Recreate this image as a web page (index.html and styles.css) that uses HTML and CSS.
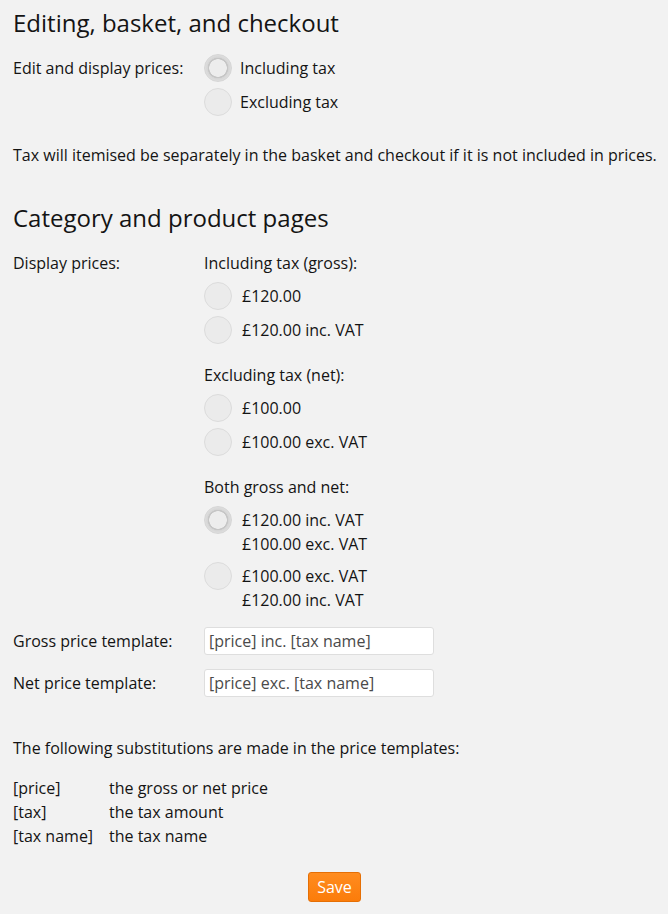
FILE: index.html
```html
<!DOCTYPE html>
<html lang="en">
<head>
<meta charset="utf-8">
<title>Tax settings</title>
<link rel="stylesheet" href="styles.css">
</head>
<body>
<form class="page">
  <h2 class="heading first">Editing, basket, and checkout</h2>
  <div class="field edit-field">
    <div class="field-label">Edit and display prices:</div>
    <div class="field-body">
      <label class="option"><input type="radio" name="edit" checked><span class="opt-text">Including tax</span></label>
      <label class="option"><input type="radio" name="edit"><span class="opt-text">Excluding tax</span></label>
    </div>
  </div>
  <p class="note">Tax will itemised be separately in the basket and checkout if it is not included in prices.</p>

  <h2 class="heading">Category and product pages</h2>
  <div class="field display-field">
    <div class="field-label">Display prices:</div>
    <div class="field-body">
      <div class="group-title">Including tax (gross):</div>
      <label class="option"><input type="radio" name="display"><span class="opt-text">£120.00</span></label>
      <label class="option"><input type="radio" name="display"><span class="opt-text">£120.00 inc. VAT</span></label>
      <div class="group-title spaced">Excluding tax (net):</div>
      <label class="option"><input type="radio" name="display"><span class="opt-text">£100.00</span></label>
      <label class="option"><input type="radio" name="display"><span class="opt-text">£100.00 exc. VAT</span></label>
      <div class="group-title spaced">Both gross and net:</div>
      <label class="option"><input type="radio" name="display" checked><span class="opt-text">£120.00 inc. VAT<br>£100.00 exc. VAT</span></label>
      <label class="option"><input type="radio" name="display"><span class="opt-text">£100.00 exc. VAT<br>£120.00 inc. VAT</span></label>
    </div>
  </div>

  <div class="templates">
    <div class="field input-row">
      <div class="field-label">Gross price template:</div>
      <div class="field-body"><input class="text-input" type="text" value="[price] inc. [tax name]"></div>
    </div>
    <div class="field input-row">
      <div class="field-label">Net price template:</div>
      <div class="field-body"><input class="text-input" type="text" value="[price] exc. [tax name]"></div>
    </div>
  </div>

  <p class="subst-intro">The following substitutions are made in the price templates:</p>
  <dl class="subst">
    <dt>[price]</dt><dd>the gross or net price</dd>
    <dt>[tax]</dt><dd>the tax amount</dd>
    <dt>[tax name]</dt><dd>the tax name</dd>
  </dl>

  <div class="actions"><button type="button" class="save">Save</button></div>
</form>
</body>
</html>
```

FILE: styles.css
```css
html, body {
  margin: 0;
  padding: 0;
  background: #f2f2f2;
}
body {
  font-family: "Open Sans", "Noto Sans", sans-serif;
  font-size: 16px;
  line-height: 24px;
  color: #141414;
}
.page {
  padding: 0 4px 0 13px;
}
.heading {
  font-size: 24px;
  font-weight: 400;
  line-height: 30px;
  margin: 36px 0 0;
  color: #141414;
}
.heading.first {
  margin-top: 8px;
}
.field {
  display: grid;
  grid-template-columns: 191px 1fr;
}
.edit-field {
  margin-top: 13px;
}
.edit-field .field-label {
  padding-top: 5px;
}
.display-field {
  margin-top: 18px;
}
.field-body {
  display: flex;
  flex-direction: column;
  align-items: flex-start;
}
.option {
  display: flex;
  align-items: flex-start;
  padding: 3px 0;
  cursor: pointer;
}
.option input {
  -webkit-appearance: none;
  appearance: none;
  margin: 0 8px 0 0;
  width: 28px;
  height: 28px;
  flex: 0 0 28px;
  border-radius: 50%;
  border: 1px solid #dcdcdc;
  background: #ebebeb;
  box-sizing: border-box;
}
.display-field .option input {
  margin-right: 10px;
}
.option input:checked {
  background: radial-gradient(circle at center, #ededed 0 8.5px, #c6c6c6 9px 10px, #d5d5d5 10.5px, #dedede 13px);
  border-color: #d6d6d6;
}
.opt-text {
  padding-top: 2px;
}
.group-title {
  margin-bottom: 4px;
}
.group-title.spaced {
  margin-top: 16px;
}
.note {
  margin: 24px 0 0;
}
.templates {
  margin-top: 5px;
}
.input-row {
  padding: 7px 0;
  align-items: center;
}
.text-input {
  box-sizing: border-box;
  width: 230px;
  height: 28px;
  border: 1px solid #dedede;
  border-radius: 3px;
  background: #fff;
  font-family: "Open Sans", "Noto Sans", sans-serif;
  font-size: 16px;
  color: #4a4a4a;
  padding: 0 4px;
  margin: 0;
}
.subst-intro {
  margin: 32px 0 0;
}
.subst {
  margin: 16px 0 0;
  display: grid;
  grid-template-columns: 96px 1fr;
}
.subst dt, .subst dd {
  margin: 0;
}
.actions {
  display: flex;
  justify-content: center;
  margin-top: 24px;
  padding-bottom: 12px;
  padding-right: 8px;
}
.save {
  font-family: "Open Sans", "Noto Sans", sans-serif;
  font-size: 16px;
  line-height: 20px;
  color: #fff;
  background: linear-gradient(#ff8c1f, #fb7c0a);
  border: 1px solid #e56f05;
  border-radius: 3px;
  padding: 4px 8px;
  height: 30px;
  box-sizing: border-box;
  margin: 0;
}
```
